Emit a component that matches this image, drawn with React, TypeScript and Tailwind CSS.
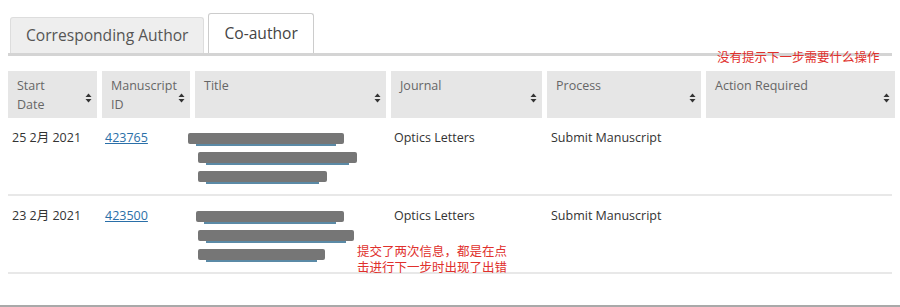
import React from "react";

const cols = "grid grid-cols-[89px_88px_191px_151px_154px_189px] gap-x-[5px]";

function SortIcon() {
  return (
    <svg width="7" height="10" viewBox="0 0 7 10" className="shrink-0">
      <path d="M3.5 0.5 L6.5 4 L0.5 4 Z" fill="#333" />
      <path d="M3.5 9.5 L6.5 6 L0.5 6 Z" fill="#333" />
    </svg>
  );
}

function HeaderCell({ lines }: { lines: string[] }) {
  return (
    <div className="flex items-start justify-between bg-[#e6e6e6] pl-[9px] pr-[5px] pt-[5px] h-[47px]">
      <div className="leading-[19px]">
        {lines.map((l) => (
          <div key={l}>{l}</div>
        ))}
      </div>
      <div className="self-center pt-[2px]">
        <SortIcon />
      </div>
    </div>
  );
}

function Blob({ w, ml = 0 }: { w: number; ml?: number }) {
  return (
    <div className="flex flex-col" style={{ width: w, marginLeft: ml }}>
      <div className="h-[11px] bg-[#767676] rounded-[2px]" />
      <div className="h-[2px] bg-[#5b8aa6] mx-[8px]" />
    </div>
  );
}

const rows = [
  { date: "25 2月 2021", id: "423765", blobs: [[156, 0], [159, 10], [129, 10]] },
  { date: "23 2月 2021", id: "423500", blobs: [[148, 8], [156, 10], [127, 10]] },
];

export default function App() {
  return (
    <div className="relative w-[900px] h-[307px] bg-white text-[12.5px] text-[#444] font-['Open_Sans','Noto_Sans','Noto_Sans_CJK_SC',sans-serif]">
      <div className="flex items-end gap-[4px] pl-[10px] pt-[13px]">
        <div className="h-[36px] px-[15px] flex items-center bg-[#eeeeee] border border-[#dddddd] border-b-0 rounded-t-[3px] text-[15.6px] text-[#555]">
          Corresponding Author
        </div>
        <div className="h-[40px] px-[15px] flex items-center bg-white border border-[#cccccc] border-b-0 rounded-t-[3px] text-[15.6px] text-[#444]">
          Co-author
        </div>
      </div>
      <div className="mx-[8px] h-[3px] bg-[#d4d4d4]" />

      <div className="mx-[8px] mt-[15px]">
        <div className={cols + " text-[#666]"}>
          <HeaderCell lines={["Start", "Date"]} />
          <HeaderCell lines={["Manuscript", "ID"]} />
          <HeaderCell lines={["Title"]} />
          <HeaderCell lines={["Journal"]} />
          <HeaderCell lines={["Process"]} />
          <HeaderCell lines={["Action Required"]} />
        </div>

        {rows.map((r) => (
          <div key={r.id} className={cols + " border-b-2 border-[#e8e8e8] h-[78px] pt-[10px] text-[#333]"}>
            <div className="pl-[4px] leading-[19px]">{r.date}</div>
            <div className="pl-[3px] leading-[19px]">
              <span className="text-[#2a6fa8] underline">{r.id}</span>
            </div>
            <div className="flex flex-col gap-[6px] pt-[5px] -ml-[7px]">
              {r.blobs.map(([w, ml], i) => (
                <Blob key={i} w={w} ml={ml} />
              ))}
            </div>
            <div className="pl-[3px] leading-[19px]">Optics Letters</div>
            <div className="pl-[4px] leading-[19px]">Submit Manuscript</div>
            <div />
          </div>
        ))}
      </div>

      <div className="absolute left-0 right-0 bottom-0 h-[2px] bg-[#a9a9a9]" />

      <div className="absolute left-[717px] top-[50px] text-[12.5px] leading-[16px] text-[#e0302c]">
        没有提示下一步需要什么操作
      </div>
      <div className="absolute left-[357px] top-[244px] w-[156px] text-[12.5px] leading-[16px] text-[#e0302c]">
        提交了两次信息，都是在点
        <br />
        击进行下一步时出现了出错
      </div>
    </div>
  );
}
